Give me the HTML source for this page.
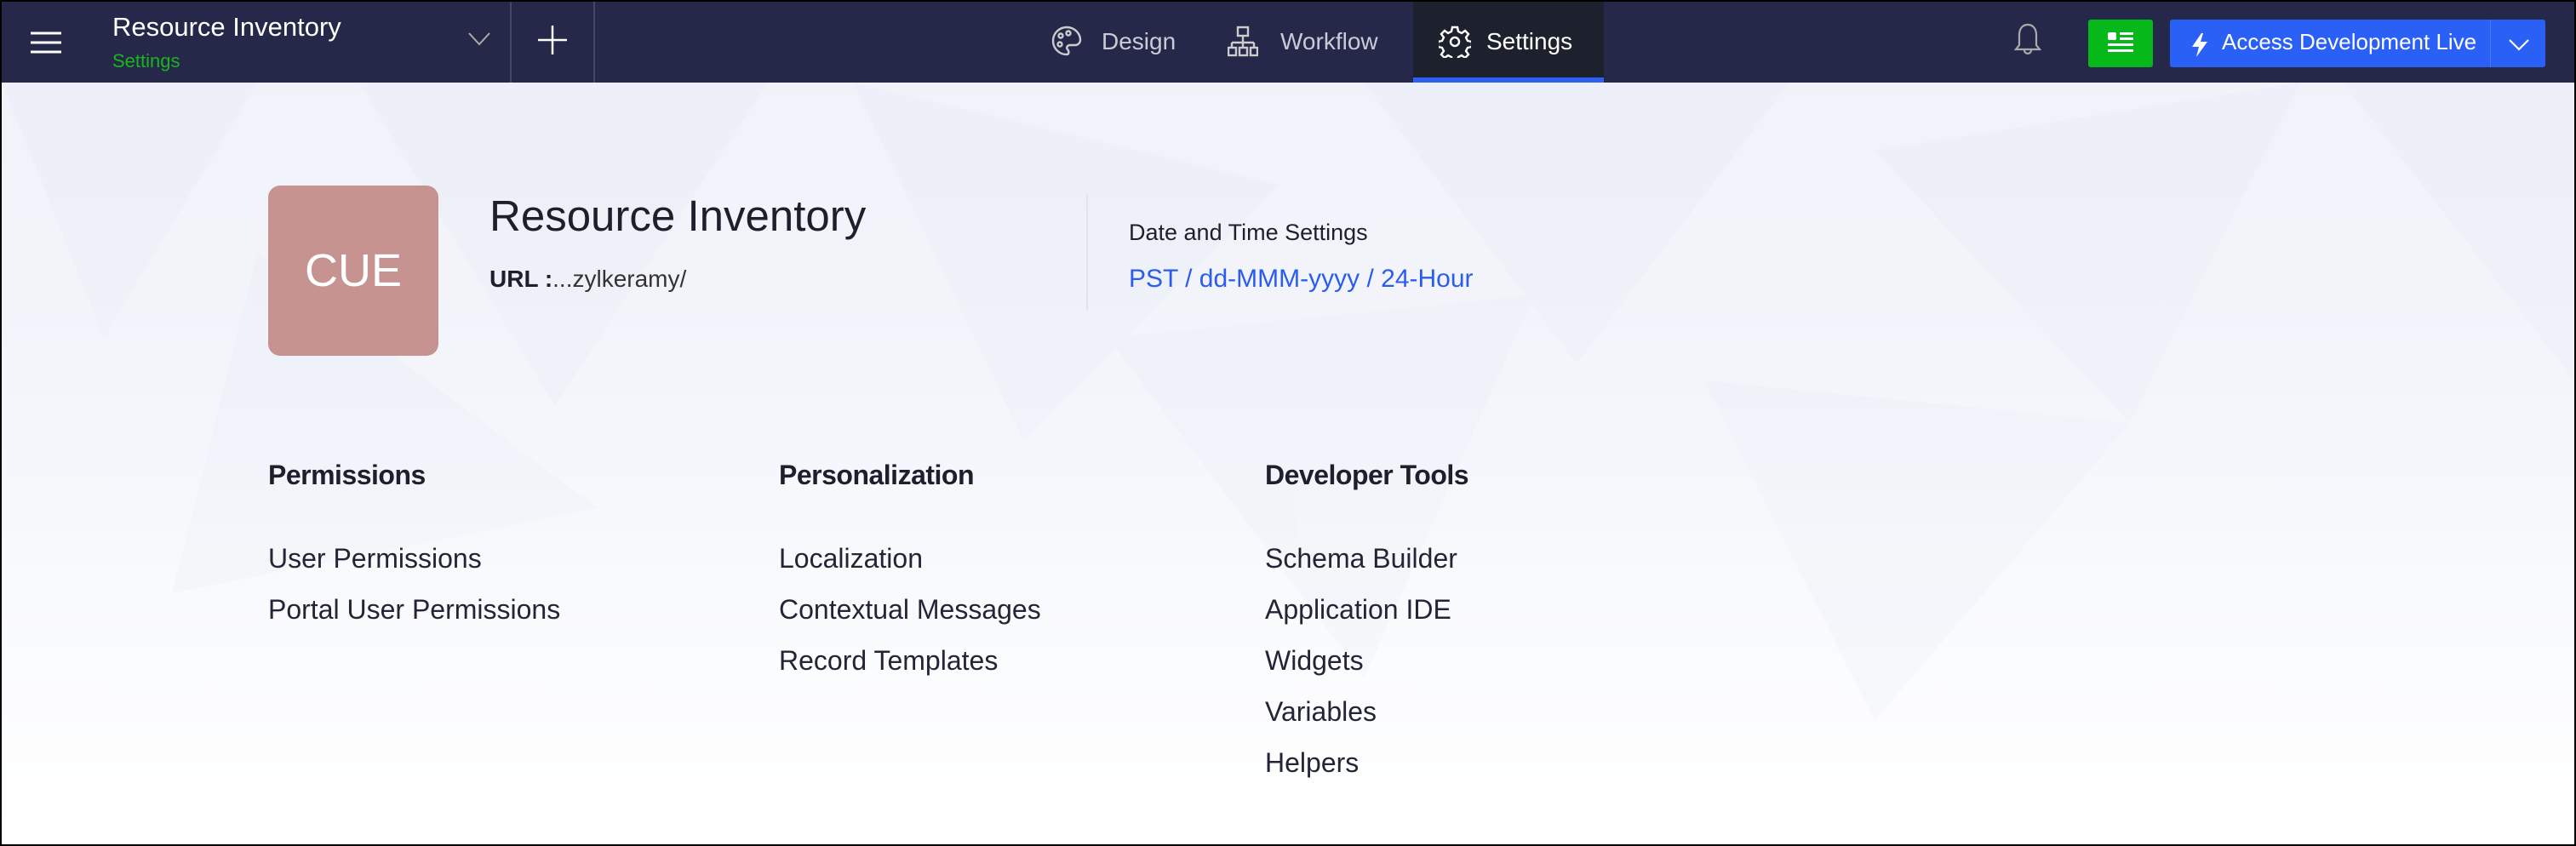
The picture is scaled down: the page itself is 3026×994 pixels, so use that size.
<!DOCTYPE html>
<html><head><meta charset="utf-8"><style>
*{margin:0;padding:0;box-sizing:border-box}
html,body{width:3026px;height:994px;overflow:hidden;background:#000}
body{font-family:"Liberation Sans",sans-serif;position:relative}
#frame{position:absolute;left:2px;top:2px;width:3022px;height:990px;overflow:hidden;background:linear-gradient(#eff2f9 0%,#f3f5fb 45%,#fafbfd 75%,#fff 100%)}
#hdr{position:absolute;left:0;top:0;width:3022px;height:95px;background:#26284a}
.a{position:absolute;white-space:nowrap}
.w{color:#fff}
.nav{color:#c9cbd6;font-size:28px;top:31px}
.it{font-size:32px;color:#232536}
.h{font-size:32px;font-weight:bold;color:#1d1f2c;top:538px;letter-spacing:-0.5px}
</style></head><body><div id="frame">
<svg class="a" style="left:0;top:95px" width="3022" height="895" viewBox="0 0 3022 895">
<g fill="#dfe4f0" opacity="0.15">
<polygon points="0,0 300,0 120,300"/>
<polygon points="420,0 900,0 650,380"/>
<polygon points="1000,0 1500,120 1200,420"/>
<polygon points="1600,0 2100,0 1850,330"/>
<polygon points="2200,80 2700,0 2500,400"/>
<polygon points="2750,0 3022,0 3022,350"/>
<polygon points="300,200 700,500 200,600"/>
<polygon points="1300,300 1800,250 1600,700"/>
<polygon points="2000,350 2500,400 2200,750"/>
</g></svg>
<div id="hdr">
<svg class="a" style="left:34px;top:34px" width="36" height="28"><g stroke="#fff" stroke-width="3"><line x1="0" y1="3" x2="36" y2="3"/><line x1="0" y1="14" x2="36" y2="14"/><line x1="0" y1="25" x2="36" y2="25"/></g></svg>
<div class="a w" style="left:130px;top:12px;font-size:31px">Resource Inventory</div>
<div class="a" style="left:130px;top:57px;font-size:22px;color:#16b71a">Settings</div>
<svg class="a" style="left:548px;top:36px" width="26" height="16"><polyline points="1,1 13,14 25,1" fill="none" stroke="#aaa" stroke-width="2"/></svg>
<div class="a" style="left:597px;top:0;width:2px;height:95px;background:#44475f"></div>
<div class="a" style="left:695px;top:0;width:2px;height:95px;background:#44475f"></div>
<svg class="a" style="left:630px;top:28px" width="34" height="34"><g stroke="#fff" stroke-width="2.5"><line x1="17" y1="0" x2="17" y2="34"/><line x1="0" y1="17" x2="34" y2="17"/></g></svg>
<svg class="a" style="left:1233px;top:28px" width="36" height="36" viewBox="0 0 36 36"><g fill="none" stroke="#ccc" stroke-width="2.4"><path d="M18 2a16 16 0 1 0 0 32c3 0 3-4 1-6s0-5 3-5h6a6 6 0 0 0 6-6C34 9 27 2 18 2z"/><circle cx="11" cy="12" r="2.5"/><circle cx="20" cy="9" r="2.5"/><circle cx="10" cy="22" r="2.5"/></g></svg>
<div class="a nav" style="left:1292px">Design</div>
<svg class="a" style="left:1440px;top:28px" width="36" height="38" viewBox="0 0 36 38"><g fill="none" stroke="#ccc" stroke-width="2.4"><rect x="12" y="2" width="12" height="10"/><path d="M18 12v8M5 20h26M5 20v6M18 20v6M31 20v6"/><rect x="1" y="26" width="9" height="9"/><rect x="14" y="26" width="9" height="9"/><rect x="27" y="26" width="8" height="9"/></g></svg>
<div class="a nav" style="left:1502px">Workflow</div>
<div class="a" style="left:1658px;top:0;width:224px;height:95px;background:#1d212d"></div>
<div class="a" style="left:1658px;top:89px;width:224px;height:6px;background:#2d61f5"></div>
<svg class="a" style="left:1688px;top:28px" width="38" height="38" viewBox="0 0 38 38"><g fill="none" stroke="#fff" stroke-width="2.4"><path d="M16 2h6l1 5 4 2 4-3 4 4-3 4 2 4 5 1v6l-5 1-2 4 3 4-4 4-4-3-4 2-1 5h-6l-1-5-4-2-4 3-4-4 3-4-2-4-5-1v-6l5-1 2-4-3-4 4-4 4 3 4-2z"/><circle cx="19" cy="19" r="5"/></g></svg>
<div class="a nav" style="left:1744px;color:#fff">Settings</div>
<svg class="a" style="left:2364px;top:24px" width="32" height="44" viewBox="0 0 32 44"><g fill="none" stroke="#aaa" stroke-width="2.2"><path d="M16 3c-7 0-10 6-10 12v12l-4 5h28l-4-5V15c0-6-3-12-10-12z"/><path d="M12 33a4 4 0 0 0 8 0"/></g></svg>
<div class="a" style="left:2451px;top:21px;width:76px;height:56px;background:#07b81b;border-radius:3px"></div>
<svg class="a" style="left:2474px;top:36px" width="30" height="28"><g fill="#fff"><rect x="0" y="0" width="10" height="9" rx="2"/><rect x="14" y="0" width="16" height="3"/><rect x="14" y="6" width="16" height="3"/><rect x="0" y="13" width="30" height="3"/><rect x="0" y="20" width="30" height="3"/></g></svg>
<div class="a" style="left:2547px;top:21px;width:441px;height:56px;background:#2b60f6;border-radius:3px"></div>
<div class="a" style="left:2923px;top:21px;width:1px;height:56px;background:#4a78f7"></div>
<svg class="a" style="left:2572px;top:37px" width="20" height="28"><polygon points="12,0 1,16 9,16 6,28 19,10 11,10 14,0" fill="#fff"/></svg>
<div class="a w" style="left:2608px;top:32px;font-size:26px">Access Development Live</div>
<svg class="a" style="left:2945px;top:44px" width="24" height="14"><polyline points="1,1 12,12 23,1" fill="none" stroke="#fff" stroke-width="2.2"/></svg>
</div>
<div class="a" style="left:313px;top:216px;width:200px;height:200px;background:#c69390;border-radius:14px;color:#fff;font-size:54px;text-align:center;line-height:200px">CUE</div>
<div class="a" style="left:573px;top:222px;font-size:51px;color:#1d1f2c">Resource Inventory</div>
<div class="a" style="left:573px;top:310px;font-size:28px;color:#333"><b style="color:#1d1f2c">URL :</b>...zylkeramy/</div>
<div class="a" style="left:1274px;top:226px;width:2px;height:137px;background:#e2e4ea"></div>
<div class="a" style="left:1324px;top:256px;font-size:27px;color:#1d1f2c">Date and Time Settings</div>
<div class="a" style="left:1324px;top:309px;font-size:30px;color:#2a5cf0">PST / dd-MMM-yyyy / 24-Hour</div>
<div class="a h" style="left:313px">Permissions</div>
<div class="a h" style="left:913px">Personalization</div>
<div class="a h" style="left:1484px">Developer Tools</div>
<div class="a it" style="left:313px;top:636px">User Permissions</div>
<div class="a it" style="left:313px;top:696px">Portal User Permissions</div>
<div class="a it" style="left:913px;top:636px">Localization</div>
<div class="a it" style="left:913px;top:696px">Contextual Messages</div>
<div class="a it" style="left:913px;top:756px">Record Templates</div>
<div class="a it" style="left:1484px;top:636px">Schema Builder</div>
<div class="a it" style="left:1484px;top:696px">Application IDE</div>
<div class="a it" style="left:1484px;top:756px">Widgets</div>
<div class="a it" style="left:1484px;top:816px">Variables</div>
<div class="a it" style="left:1484px;top:876px">Helpers</div>
</div></body></html>
